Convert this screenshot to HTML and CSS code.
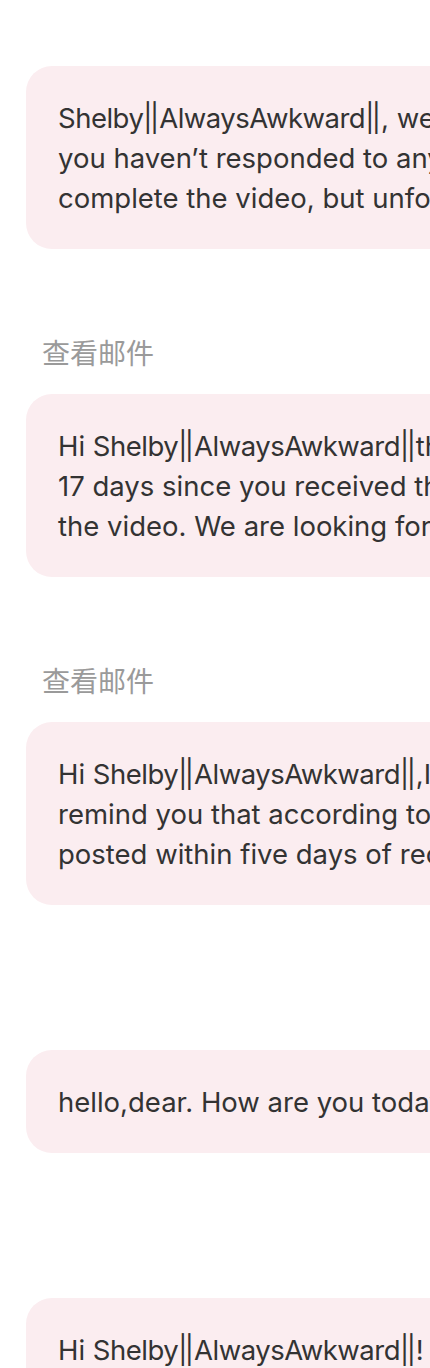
FILE: index.html
```html
<!DOCTYPE html>
<html lang="en">
<head>
<meta charset="utf-8">
<title>Messages</title>
<link rel="stylesheet" href="styles.css">
</head>
<body>
<div class="list">
  <div class="msg">
    <div class="bubble"><p class="text"><span class="name">Shelby<span class="sep">||</span>AlwaysAwkward<span class="sep">||</span></span>, we’ve noticed that<br>you haven’t responded to any of our messages yet. We hope you can<br>complete the video, but unfortunately we haven’t heard from you.</p></div>
  </div>
  <div class="msg">
    <div class="label">查看邮件</div>
    <div class="bubble"><p class="text">Hi <span class="name">Shelby<span class="sep">||</span>AlwaysAwkward<span class="sep">||</span></span>this is a friendly reminder that it has been<br>17 days since you received the product and we still haven’t seen<br>the video. We are looking forward to your wonderful content.</p></div>
  </div>
  <div class="msg">
    <div class="label">查看邮件</div>
    <div class="bubble"><p class="text">Hi <span class="name">Shelby<span class="sep">||</span>AlwaysAwkward<span class="sep">||</span></span>,I would like to kindly<br>remind you that according to our agreement the video should be<br>posted within five days of receiving the product.</p></div>
  </div>
  <div class="msg">
    <div class="label empty"></div>
    <div class="bubble"><p class="text">hello,dear. How are you today?</p></div>
  </div>
  <div class="msg">
    <div class="label empty"></div>
    <div class="bubble"><p class="text">Hi <span class="name">Shelby<span class="sep">||</span>AlwaysAwkward<span class="sep">||</span></span>! Thank you for working with us.<br>We would love to hear about your experience.</p></div>
  </div>
</div>
</body>
</html>
```

FILE: styles.css
```css
html, body {
  margin: 0;
  padding: 0;
  background: #ffffff;
  overflow: hidden;
}
body {
  font-family: Inter, "Noto Sans CJK SC", sans-serif;
  color: #333333;
}
.list {
  display: flex;
  flex-direction: column;
  gap: 83px;
  padding: 66px 0 0 26px;
  width: 760px;
}
.msg {
  display: flex;
  flex-direction: column;
  gap: 22px;
}
.msg:first-child .label { display: none; }
.label {
  font-family: "Noto Sans CJK SC", sans-serif;
  font-size: 28px;
  line-height: 40px;
  height: 40px;
  color: #9a9a9a;
  padding-left: 16px;
}
.bubble {
  background: #fbedf0;
  border-radius: 26px;
  padding: 32px 32px 31px;
  width: 720px;
  box-sizing: border-box;
}
.text {
  margin: 0;
  font-size: 27.5px;
  line-height: 40px;
  white-space: nowrap;
}
.name {
  letter-spacing: -0.5px;
}
.sep {
  letter-spacing: -2.5px;
  margin-right: 2.5px;
}
```
